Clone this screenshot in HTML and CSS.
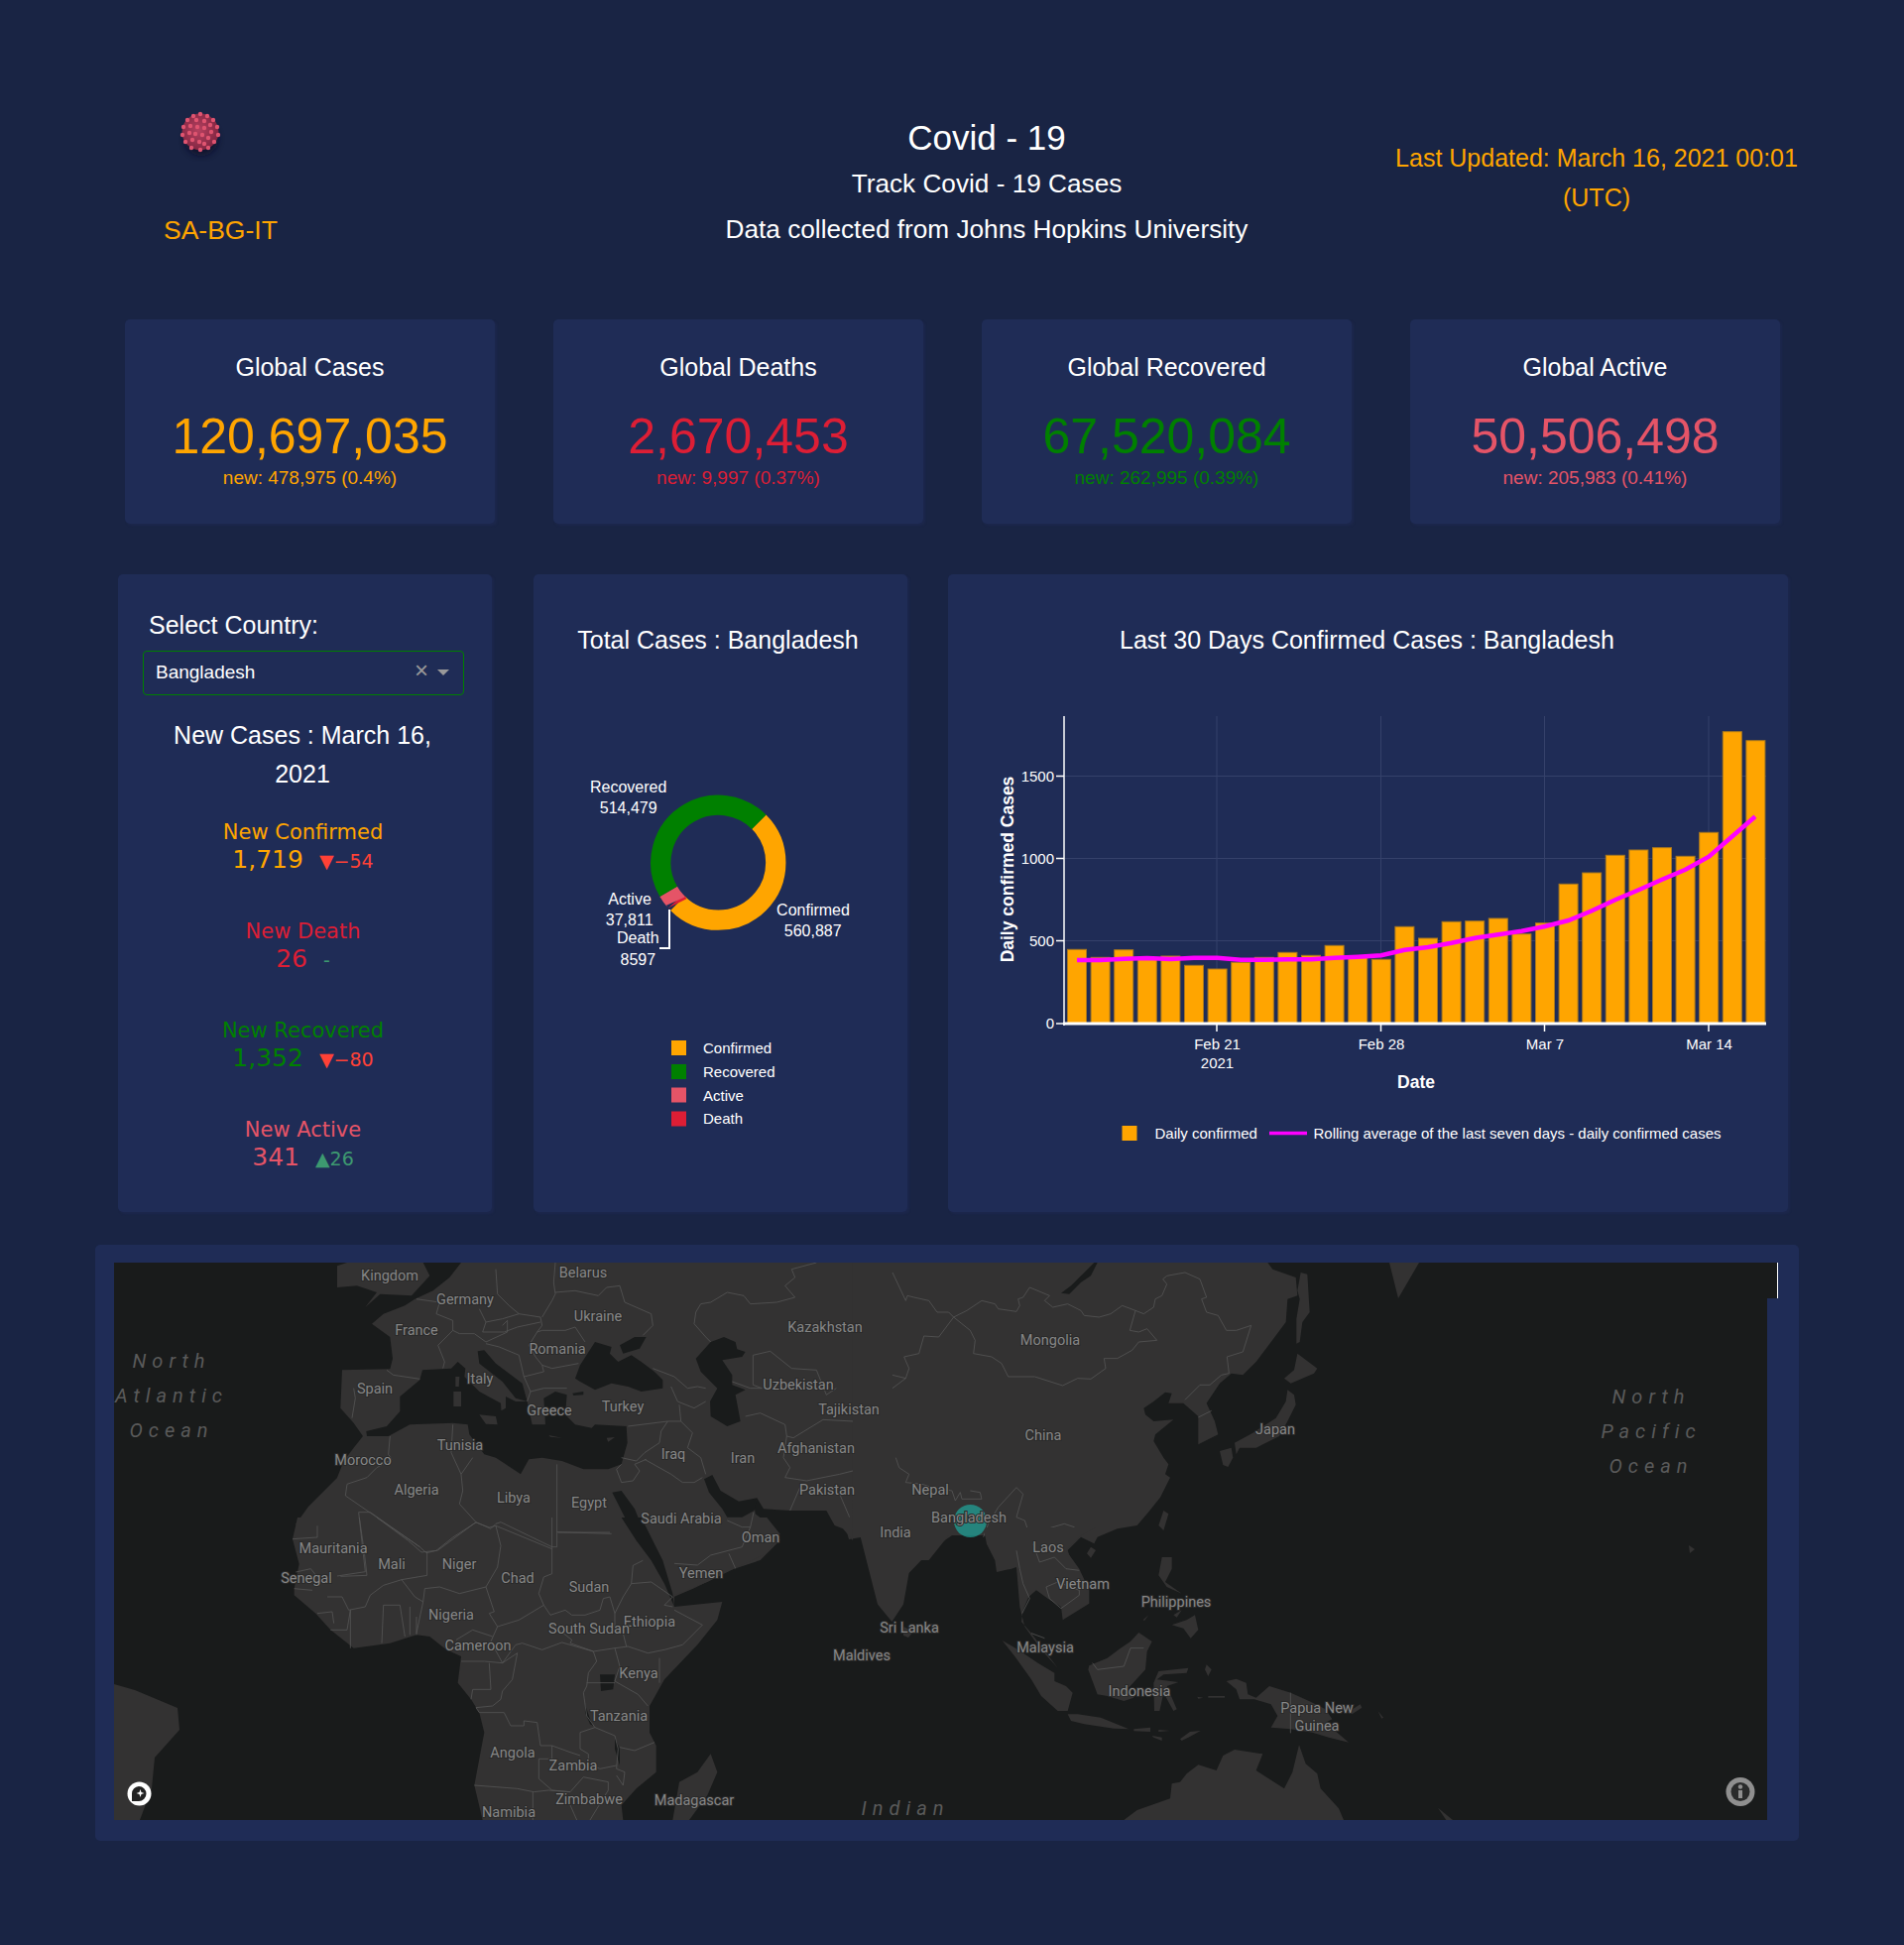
FILE: index.html
```html
<!DOCTYPE html>
<html>
<head>
    <meta charset="UTF-8">
    <title>Covid - 19</title>
    <link rel="stylesheet" href="styles.css">
</head>
<body>
    <div class="header">
        <div class="brand">
            <svg class="virus" width="60" height="60" viewBox="-30 -30 60 60">
                <defs>
                    <radialGradient id="virusBody" cx="45%" cy="45%" r="60%">
                        <stop offset="0" stop-color="#b5405f"/>
                        <stop offset="1" stop-color="#7e2440"/>
                    </radialGradient>
                    <filter id="virusShadow" x="-40%" y="-40%" width="180%" height="180%">
                        <feGaussianBlur stdDeviation="3"/>
                    </filter>
                </defs>
                <ellipse cx="1" cy="7" rx="17" ry="17" fill="#0c1128" opacity=".75" filter="url(#virusShadow)"/>
                <circle r="18.5" fill="url(#virusBody)"/>
                <g fill="#df5470">
                    <circle cx="0" cy="-18" r="2.2"/><circle cx="7" cy="-16" r="2.2"/><circle cx="-7" cy="-16" r="2.2"/>
                    <circle cx="13" cy="-12" r="2.2"/><circle cx="-13" cy="-12" r="2.2"/><circle cx="17" cy="-5" r="2.2"/>
                    <circle cx="-17" cy="-5" r="2.2"/><circle cx="18" cy="3" r="2.2"/><circle cx="-18" cy="3" r="2.2"/>
                    <circle cx="14" cy="10" r="2.2"/><circle cx="-15" cy="10" r="2.2"/><circle cx="8" cy="16" r="2.2"/>
                    <circle cx="-9" cy="16" r="2.2"/><circle cx="0" cy="18" r="2.2"/>
                    <circle cx="-4" cy="-12" r="2.2"/><circle cx="4" cy="-11" r="2.2"/><circle cx="10" cy="-7" r="2.2"/>
                    <circle cx="-10" cy="-6" r="2.2"/><circle cx="-3" cy="-5" r="2.2"/><circle cx="4" cy="-4" r="2.2"/>
                    <circle cx="11" cy="0" r="2.2"/><circle cx="-11" cy="1" r="2.2"/><circle cx="-5" cy="2" r="2.2"/>
                    <circle cx="2" cy="3" r="2.2"/><circle cx="8" cy="6" r="2.2"/><circle cx="-8" cy="8" r="2.2"/>
                    <circle cx="-1" cy="10" r="2.2"/><circle cx="4" cy="12" r="2.2"/>
                </g>
            </svg>
            <div class="brand-name">SA-BG-IT</div>
        </div>
        <div class="titles">
            <h3>Covid - 19</h3>
            <h5>Track Covid - 19 Cases</h5>
            <h5>Data collected from Johns Hopkins University</h5>
        </div>
        <div class="updated">Last Updated: March 16, 2021 00:01 (UTC)</div>
    </div>

    <div class="stats">
        <div class="card">
            <div class="card-title">Global Cases</div>
            <div class="card-value orange">120,697,035</div>
            <div class="card-new orange">new: 478,975 (0.4%)</div>
        </div>
        <div class="card">
            <div class="card-title">Global Deaths</div>
            <div class="card-value red">2,670,453</div>
            <div class="card-new red">new: 9,997 (0.37%)</div>
        </div>
        <div class="card">
            <div class="card-title">Global Recovered</div>
            <div class="card-value green">67,520,084</div>
            <div class="card-new green">new: 262,995 (0.39%)</div>
        </div>
        <div class="card">
            <div class="card-title">Global Active</div>
            <div class="card-value pink">50,506,498</div>
            <div class="card-new pink">new: 205,983 (0.41%)</div>
        </div>
    </div>

    <div class="charts">
        <div class="panel panel-country">
            <p class="select-label">Select Country:</p>
            <div class="dropdown">
                <span class="dropdown-value">Bangladesh</span>
                <span class="dropdown-clear">×</span>
                <span class="dropdown-caret"></span>
            </div>
            <p class="new-cases">New Cases : March 16, 2021</p>
            <div class="indicator orange">
                <div class="indicator-title">New Confirmed</div>
                <div class="indicator-row"><span class="indicator-value">1,719</span><span class="delta down">▼−54</span></div>
            </div>
            <div class="indicator red">
                <div class="indicator-title">New Death</div>
                <div class="indicator-row"><span class="indicator-value">26</span><span class="delta up">-</span></div>
            </div>
            <div class="indicator green">
                <div class="indicator-title">New Recovered</div>
                <div class="indicator-row"><span class="indicator-value">1,352</span><span class="delta down">▼−80</span></div>
            </div>
            <div class="indicator pink">
                <div class="indicator-title">New Active</div>
                <div class="indicator-row"><span class="indicator-value">341</span><span class="delta up">▲26</span></div>
            </div>
        </div>

        <div class="panel panel-donut">
            <svg class="chart" width="378" height="643" viewBox="538 579 378 643">
                <text class="chart-title" x="724" y="654" text-anchor="middle">Total Cases : Bangladesh</text>
                <g transform="translate(724.3 869.7)" fill="none" stroke-width="20.3">
                    <circle r="58" pathLength="360" stroke="#ffa500" stroke-dasharray="180 180" transform="rotate(-45)"/>
                    <circle r="58" pathLength="360" stroke="#dd1e35" stroke-dasharray="2.76 357.24" transform="rotate(135)"/>
                    <circle r="58" pathLength="360" stroke="#e55467" stroke-dasharray="12.14 347.86" transform="rotate(137.76)"/>
                    <circle r="58" pathLength="360" stroke="#008000" stroke-dasharray="165.1 194.9" transform="rotate(149.9)"/>
                </g>
                <polyline points="675,917 675,956 665,956" fill="none" stroke="#fff" stroke-width="2"/>
                <g class="donut-label" text-anchor="middle">
                    <text x="633.7" y="799">Recovered</text>
                    <text x="633.7" y="820">514,479</text>
                    <text x="635" y="912">Active</text>
                    <text x="634.7" y="933">37,811</text>
                    <text x="643.3" y="951">Death</text>
                    <text x="643.3" y="973">8597</text>
                    <text x="820" y="923">Confirmed</text>
                    <text x="819.7" y="944">560,887</text>
                </g>
                <rect x="677" y="1049" width="15" height="15" fill="#ffa500"/>
                <rect x="677" y="1073" width="15" height="15" fill="#008000"/>
                <rect x="677" y="1096.5" width="15" height="15" fill="#e55467"/>
                <rect x="677" y="1120.5" width="15" height="15" fill="#dd1e35"/>
                <g class="legend-label">
                    <text x="709" y="1062">Confirmed</text>
                    <text x="709" y="1086">Recovered</text>
                    <text x="709" y="1110">Active</text>
                    <text x="709" y="1133">Death</text>
                </g>
            </svg>
        </div>

        <div class="panel panel-bars">
            <svg class="chart" width="848" height="643" viewBox="957 579 848 643">
                <text class="chart-title" x="1379.5" y="654" text-anchor="middle">Last 30 Days Confirmed Cases : Bangladesh</text>
                <g class="grid">
                    <line x1="1074" x2="1782" y1="782.5" y2="782.5"/>
                    <line x1="1074" x2="1782" y1="865.5" y2="865.5"/>
                    <line x1="1074" x2="1782" y1="948.5" y2="948.5"/>
                    <line x1="1228" x2="1228" y1="722" y2="1032"/>
                    <line x1="1393.5" x2="1393.5" y1="722" y2="1032"/>
                    <line x1="1558.5" x2="1558.5" y1="722" y2="1032"/>
                    <line x1="1724" x2="1724" y1="722" y2="1032"/>
                </g>
                <g class="bars">
                    <rect x="1077.5" y="957.3" width="19" height="74.7"/>
                    <rect x="1101.1" y="965.3" width="19" height="66.7"/>
                    <rect x="1124.7" y="957.7" width="19" height="74.3"/>
                    <rect x="1148.3" y="966.7" width="19" height="65.3"/>
                    <rect x="1171.9" y="964" width="19" height="68"/>
                    <rect x="1195.5" y="973.3" width="19" height="58.7"/>
                    <rect x="1219.1" y="977" width="19" height="55"/>
                    <rect x="1242.7" y="970.3" width="19" height="61.7"/>
                    <rect x="1266.3" y="965.3" width="19" height="66.7"/>
                    <rect x="1289.9" y="960.3" width="19" height="71.7"/>
                    <rect x="1313.5" y="963.3" width="19" height="68.7"/>
                    <rect x="1337.1" y="953.3" width="19" height="78.7"/>
                    <rect x="1360.7" y="965.7" width="19" height="66.3"/>
                    <rect x="1384.3" y="967.3" width="19" height="64.7"/>
                    <rect x="1407.9" y="934.3" width="19" height="97.7"/>
                    <rect x="1431.5" y="946" width="19" height="86"/>
                    <rect x="1455.1" y="929.3" width="19" height="102.7"/>
                    <rect x="1478.7" y="928.7" width="19" height="103.3"/>
                    <rect x="1502.3" y="926" width="19" height="106"/>
                    <rect x="1525.9" y="941.7" width="19" height="90.3"/>
                    <rect x="1549.5" y="930.7" width="19" height="101.3"/>
                    <rect x="1573.1" y="891.3" width="19" height="140.7"/>
                    <rect x="1596.7" y="880" width="19" height="152"/>
                    <rect x="1620.3" y="862.3" width="19" height="169.7"/>
                    <rect x="1643.9" y="857" width="19" height="175"/>
                    <rect x="1667.5" y="854.7" width="19" height="177.3"/>
                    <rect x="1691.1" y="863.3" width="19" height="168.7"/>
                    <rect x="1714.7" y="839.3" width="19" height="192.7"/>
                    <rect x="1738.3" y="737.7" width="19" height="294.3"/>
                    <rect x="1761.9" y="746.7" width="19" height="285.3"/>
                </g>
                <polyline class="rolling" points="1087,968 1110.6,968 1134.2,966.7 1157.8,966 1181.4,967 1205,965.7 1228.6,965.7 1252.2,967.7 1275.8,967.7 1299.4,967.3 1323,967.3 1346.6,965.7 1370.2,964.7 1393.8,963.3 1417.4,957.7 1441,955 1464.6,950.7 1488.2,945.7 1511.8,942.3 1535.4,938.7 1559,934 1582.6,928 1606.2,918.3 1629.8,907.3 1653.4,897.3 1677,886.7 1700.6,876.7 1724.2,863.7 1747.8,843.3 1771,823.3"/>
                <g class="axis">
                    <line x1="1074" x2="1074" y1="722" y2="1034"/>
                    <line x1="1073" x2="1782" y1="1032" y2="1032"/>
                    <line x1="1066" x2="1074" y1="782.5" y2="782.5"/>
                    <line x1="1066" x2="1074" y1="865.5" y2="865.5"/>
                    <line x1="1066" x2="1074" y1="948.5" y2="948.5"/>
                    <line x1="1066" x2="1074" y1="1032" y2="1032"/>
                    <line x1="1228" x2="1228" y1="1032" y2="1040"/>
                    <line x1="1393.5" x2="1393.5" y1="1032" y2="1040"/>
                    <line x1="1558.5" x2="1558.5" y1="1032" y2="1040"/>
                    <line x1="1724" x2="1724" y1="1032" y2="1040"/>
                </g>
                <g class="tick" text-anchor="end">
                    <text x="1064" y="788">1500</text>
                    <text x="1064" y="871">1000</text>
                    <text x="1064" y="954">500</text>
                    <text x="1064" y="1037">0</text>
                </g>
                <g class="tick" text-anchor="middle">
                    <text x="1228.5" y="1058">Feb 21</text>
                    <text x="1228.5" y="1077">2021</text>
                    <text x="1394" y="1058">Feb 28</text>
                    <text x="1559" y="1058">Mar 7</text>
                    <text x="1724.5" y="1058">Mar 14</text>
                </g>
                <text class="axis-title" x="1429" y="1096.5" text-anchor="middle">Date</text>
                <text class="axis-title" transform="translate(1022.5 876.5) rotate(-90)" text-anchor="middle">Daily confirmed Cases</text>
                <rect x="1132.5" y="1135" width="15" height="15" fill="#ffa500"/>
                <line x1="1281" x2="1319" y1="1142.5" y2="1142.5" stroke="#ff00ff" stroke-width="3.5"/>
                <g class="legend-label">
                    <text x="1165.5" y="1148">Daily confirmed</text>
                    <text x="1325.5" y="1148">Rolling average of the last seven days - daily confirmed cases</text>
                </g>
            </svg>
        </div>
    </div>

    <div class="map-panel">
        <div class="map">
            <svg width="1667" height="562" viewBox="115 1273 1667 562">
                <rect x="115" y="1273" width="1667" height="562" fill="#191b1b"/>

                <!-- land that falls between the traced tiles, page coordinates -->
                <g class="land">
                    <path d="M850 1273 L960 1273 L960 1548 L939.6 1562 L916.6 1586 L911 1617.6 L899.4 1635 L885 1617.6 L867.8 1550 L856 1552 L850 1530 Z"/>
                    <path d="M340 1490 L311 1519 L298 1537 L345 1537 Z"/>
                    <path d="M911 1640 L921 1645 L916 1651 L911 1649 Z"/>
                    <path d="M1401 1273 L1431 1273 L1410 1309 Z"/>
                    <path d="M1703 1558 L1709 1562 L1704 1566 Z"/>
                    <path d="M115 1698 L136 1704 L179 1722 L181 1744 L156 1772 L153 1803 L141 1835 L115 1835 Z"/>
                </g>

                <!-- tile: europe and middle east, 3x from 340,1273 -->
                <g transform="translate(340 1273) scale(.33333)">
                    <g class="land">
                        <path d="M375 0 L1560 0 L1560 840 L1530 805 L1505 795 L1480 750 L1370 750 L1290 745 L1270 712 L1262 735 L1265 760 L1330 810 L1340 840 L1280 900 L1190 930 L1080 985 L1020 1010 L1020 1020 L0 1020 L0 650 L20 600 L50 560 L78 525 L50 485 L10 440 L15 325 L160 322 L168 290 L160 225 L105 185 L140 155 L205 130 L235 110 L290 85 L340 45 Z"/>
                        <path d="M0 10 L30 0 L260 0 L280 40 L225 100 L130 95 L85 135 L120 90 L60 70 L0 75 Z"/>
                    </g>
                    <g class="water">
                        <path d="M88 510 L150 495 L190 450 L190 405 L250 355 L258 325 L345 320 L365 300 L388 320 L385 345 L430 390 L495 425 L497 455 L470 462 L510 440 L510 405 L540 420 L575 420 L590 490 L630 490 L625 410 L660 390 L695 400 L690 460 L720 490 L770 500 L780 490 L875 495 L878 545 L860 610 L820 625 L745 625 L680 600 L620 590 L580 595 L555 640 L480 590 L445 580 L400 520 L395 490 L350 485 L220 490 L155 525 L90 525 Z"/>
                        <path d="M425 268 L445 265 L480 305 L560 365 L575 420 L540 410 L500 360 L430 305 Z"/>
                        <path d="M720 350 L735 310 L780 240 L830 255 L825 275 L850 300 L890 280 L920 300 L960 330 L985 355 L985 380 L920 390 L880 375 L830 365 L780 385 L735 360 Z"/>
                        <path d="M855 250 L900 225 L935 225 L915 260 L865 275 Z"/>
                        <path d="M712 395 L745 390 L745 400 L715 402 Z"/>
                        <path d="M1085 290 L1130 240 L1170 225 L1205 240 L1210 262 L1235 270 L1225 285 L1165 295 L1195 340 L1195 370 L1235 385 L1205 400 L1220 480 L1180 495 L1130 465 L1128 420 L1150 380 L1100 330 Z"/>
                        <path d="M832 695 L860 690 L900 745 L935 830 L985 905 L1005 960 L1018 1000 L1000 1000 L945 940 L900 860 L875 780 Z"/>
                        <path d="M1110 655 L1135 642 L1160 690 L1215 722 L1270 712 L1262 750 L1225 770 L1180 770 L1165 745 L1125 695 Z"/>
                    </g>
                </g>

                <!-- tile: africa, 3x from 280,1530 -->
                <g transform="translate(280 1530) scale(.33333)">
                    <path class="land-fill" d="M60 0 L1480 0 L1520 50 L1475 110 L1380 155 L1300 195 L1200 235 L1200 270 L1345 255 L1330 310 L1270 385 L1170 490 L1125 570 L1125 650 L1145 690 L1145 770 L1085 820 L1040 870 L1045 915 L620 915 L595 810 L625 650 L610 590 L585 550 L545 500 L555 420 L510 400 L460 360 L420 355 L340 380 L230 395 L160 340 L115 290 L50 235 L50 215 L65 140 L45 65 Z"/>
                    <path class="land-fill" d="M1310 715 L1330 770 L1300 840 L1245 915 L1195 915 L1215 800 L1270 770 Z"/>
                    <g class="water">
                        <path d="M1040 0 L1100 0 L1130 60 L1165 130 L1195 230 L1200 270 L1170 200 L1130 130 L1085 70 Z"/>
                        <path d="M975 475 L1020 475 L1015 520 L978 525 Z"/>
                        <path d="M930 565 L945 610 L955 630 L945 625 L930 590 Z"/>
                        <path d="M1020 665 L1035 700 L1035 750 L1020 700 Z"/>
                    </g>
                    <g class="border">
                        <polyline points="120,25 120,60 45,65"/>
                        <polyline points="247,0 262,105 270,175 190,178"/>
                        <polyline points="300,0 395,70 435,105 480,100 530,60 600,15 640,30 660,25 830,95"/>
                        <polyline points="660,25 675,85 665,150 630,210 655,285 640,290 665,330 645,375 680,440"/>
                        <polyline points="830,0 830,170 805,180 790,230 805,265"/>
                        <polyline points="848,45 1005,45"/>
                        <polyline points="452,105 452,175 375,188 320,205 280,235 265,270 215,280 195,240 150,240"/>
                        <polyline points="375,188 415,240 440,255 420,350"/>
                        <polyline points="440,255 445,215 490,210 550,230 630,210"/>
                        <polyline points="805,265 730,310 665,330"/>
                        <polyline points="805,265 825,295 870,280 890,295 930,295 975,280 985,245 1005,240 1020,290 1020,340"/>
                        <polyline points="1020,290 1045,240 1070,200 1130,195 1195,240"/>
                        <polyline points="1070,200 1075,145 1105,130"/>
                        <polyline points="1195,270 1170,265 1195,240"/>
                        <polyline points="1200,280 1285,325 1225,385 1170,400 1120,410 1060,390 1020,395"/>
                        <polyline points="1020,340 1045,350 1055,390"/>
                        <polyline points="825,320 890,370 885,380 955,405 1020,395"/>
                        <polyline points="955,405 965,435 940,470 935,510 925,530 935,600 960,635 1020,660 1030,700 1025,760 1050,770 1045,810 1025,780"/>
                        <polyline points="1020,395 1035,450 1020,495 1090,535 1120,570"/>
                        <polyline points="1155,425 1155,500"/>
                        <polyline points="935,500 1020,500"/>
                        <polyline points="960,635 915,650 915,700 940,715 940,745 975,760 1025,750"/>
                        <polyline points="1035,695 1080,705 1140,680"/>
                        <polyline points="680,440 720,385 740,380 800,400 860,378 955,405"/>
                        <polyline points="725,410 680,440 625,435 555,435"/>
                        <polyline points="725,410 710,490 680,525 675,550 650,570 600,575 610,590 685,590 705,630 745,630 745,615 785,620 795,690 830,690 885,710 915,720"/>
                        <polyline points="830,690 830,730 790,730 790,790 830,825 885,830 925,785 1000,800 1000,825 945,915"/>
                        <polyline points="595,810 725,820 775,830 820,825 885,830"/>
                        <polyline points="772,830 772,915"/>
                        <polyline points="885,870 905,915"/>
                        <polyline points="640,440 645,520 590,520 585,550"/>
                        <polyline points="220,395 220,280 210,340 160,340"/>
                        <polyline points="120,290 165,285 170,320"/>
                        <polyline points="315,380 320,265 370,265 385,360"/>
                        <polyline points="400,355 400,270"/>
                        <polyline points="420,355 420,300"/>
                        <polyline points="50,215 105,220"/>
                        <polyline points="55,165 100,155 120,180"/>
                        <polyline points="650,360 590,340 540,370"/>
                    </g>
                </g>

                <!-- tile: europe borders, drawn after africa so they stay on top -->
                <g transform="translate(340 1273) scale(.33333)">
                    <g class="land">
                        <path d="M358 345 L370 345 L368 375 L358 375 Z"/>
                        <path d="M352 390 L375 390 L375 435 L352 435 Z"/>
                        <path d="M430 460 L480 465 L485 490 L450 488 Z"/>
                        <path d="M640 522 L680 530 L645 527 Z"/>
                        <path d="M815 530 L840 528 L820 542 Z"/>
                    </g>
                    <g class="border">
                        <polyline points="480,20 485,95 520,130 550,155 615,165 620,190"/>
                        <polyline points="660,0 655,60 660,95 650,115 620,165"/>
                        <polyline points="660,90 720,85 790,100 815,75 855,70 870,120 950,155 955,190 925,220"/>
                        <polyline points="620,190 605,210 620,205 690,205 720,195 750,240"/>
                        <polyline points="605,210 580,250 600,285 620,310 650,320 730,305"/>
                        <polyline points="620,310 625,330 565,345 585,390 625,380 695,380"/>
                        <polyline points="585,390 575,420"/>
                        <polyline points="500,190 515,175 515,210 450,240 415,215 370,215 350,205 305,250 325,300 320,320"/>
                        <polyline points="350,205 350,175 300,155 310,120 240,110"/>
                        <polyline points="430,140 450,180 500,170 550,155"/>
                        <polyline points="450,180 440,210 505,210 545,195 615,180"/>
                        <polyline points="450,245 490,255 550,280 565,345"/>
                        <polyline points="150,325 170,340 250,352"/>
                        <polyline points="50,380 55,410 45,470"/>
                        <polyline points="955,320 1020,345 1060,380 1090,375 1115,380"/>
                        <polyline points="1010,375 1030,420 1080,440 1115,420"/>
                        <polyline points="880,495 1000,480 1040,480 1035,430"/>
                        <polyline points="1000,480 980,510 975,545 930,575 905,600 860,590"/>
                        <polyline points="930,595 1010,640 1045,665 1080,665 1105,650"/>
                        <polyline points="1040,480 1075,515 1060,560 1100,590 1115,640"/>
                        <polyline points="860,610 845,625 860,665 895,660 915,630 900,610 935,595"/>
                        <polyline points="1195,360 1250,380 1285,380 1258,370 1258,280 1310,268 1375,320 1450,325 1480,400 1510,380"/>
                        <polyline points="1235,465 1280,455 1355,490 1360,525 1380,530 1470,475 1560,480"/>
                        <polyline points="1360,525 1350,590 1370,620 1355,650 1420,660 1520,640 1560,630"/>
                        <polyline points="1400,680 1370,750"/>
                        <polyline points="1520,700 1550,770"/>
                        <polyline points="1085,150 1100,125 1130,120 1180,90 1230,100 1250,125 1330,120 1385,105 1355,70 1385,45 1375,20 1450,0"/>
                        <polyline points="1085,150 1080,185 1115,225 1130,240"/>
                        <polyline points="1180,780 1225,800 1250,800 1260,755"/>
                        <polyline points="1020,910 1090,915 1130,885 1225,860 1250,800"/>
                        <polyline points="1185,880 1205,925"/>
                        <polyline points="665,610 665,860 650,860 495,785 480,790 465,805 420,785 370,730 380,690 375,640 345,575 350,490"/>
                        <polyline points="410,590 375,640"/>
                        <polyline points="160,525 155,580 165,595 120,620 90,650 30,670 25,705 250,860 270,878 305,870 420,785"/>
                        <polyline points="665,815 830,820"/>
                        <polyline points="65,755 100,755 250,860"/>
                        <polyline points="65,755 85,935 0,948"/>
                    </g>
                </g>

                <!-- tile: north east asia, 3x from 900,1273 -->
                <g transform="translate(900 1273) scale(.33333)">
                    <g class="land">
                        <path d="M0 0 L1135 0 L1150 20 L1220 45 L1225 100 L1195 110 L1190 180 L1130 260 L1100 300 L1060 340 L1025 335 L990 365 L950 425 L975 480 L985 520 L925 550 L925 465 L880 425 L835 425 L845 395 L825 392 L790 420 L760 440 L765 460 L790 480 L850 475 L795 520 L790 540 L820 590 L835 610 L825 640 L840 650 L810 710 L770 760 L740 795 L680 805 L620 830 L610 850 L570 830 L530 870 L540 900 L315 900 L280 825 L170 825 L110 900 L0 900 Z"/>
                        <path d="M1235 30 L1255 35 L1262 150 L1240 180 L1232 240 L1222 245 L1222 170 L1232 110 L1225 85 Z"/>
                        <path d="M1225 275 L1285 320 L1275 335 L1240 350 L1205 365 L1185 350 L1215 325 Z"/>
                        <path d="M1195 385 L1215 400 L1220 430 L1195 480 L1170 525 L1100 560 L1050 560 L1040 580 L1035 545 L1090 515 L1160 470 L1190 420 Z"/>
                        <path d="M990 570 L1025 560 L1030 590 L1015 618 L1000 612 Z"/>
                        <path d="M820 750 L835 760 L820 810 L805 795 Z"/>
                        <path d="M600 860 L615 870 L600 893 L588 880 Z"/>
                    </g>
                    <g class="water">
                        <path d="M610 0 L620 0 L600 40 L570 60 L535 95 L510 92 L540 70 L580 30 Z"/>
                    </g>
                    <g class="border">
                        <polyline points="0,30 40,115 45,100 65,105 110,115 135,150 170,150 185,165 140,225 95,222 80,275 35,285 50,320 40,350 0,380"/>
                        <polyline points="0,340 40,350"/>
                        <polyline points="185,165 225,145 270,115 310,125 320,140 375,148 385,130 380,110 395,105 415,75 475,100 460,115 485,135 530,125 570,145 580,160 625,165 660,155 695,130 735,145 760,155 790,135 795,110 815,100 830,65 818,50 830,40 885,30 930,50 950,105 935,110 950,150 985,160 1010,205 1040,205 1085,190 1060,270 1012,285 1018,335 995,340 960,370 930,370 885,415"/>
                        <polyline points="185,165 235,205 250,235 245,275 300,285 330,305 350,345 430,345 515,372 560,350 600,352 645,320 640,290 680,290 725,265 745,240 800,235 770,200 745,210 718,205 735,145"/>
                        <polyline points="925,468 965,448"/>
                        <polyline points="10,590 20,620 50,640 40,665 90,670 120,680 180,690 190,720 205,695 210,715 270,715 265,695 235,690"/>
                        <polyline points="275,830 290,790 320,740 375,680 395,700 375,770 400,780 410,810 440,830 450,810 520,790 550,800 570,825"/>
                        <polyline points="415,850 370,890"/>
                    </g>
                </g>

                <!-- tile: south east asia, 3x from 960,1540 -->
                <g transform="translate(960 1540) scale(.33333)">
                    <g class="land">
                        <path d="M95 0 L435 0 L390 25 L345 70 L385 125 L415 190 L415 230 L335 280 L330 240 L290 215 L255 190 L232 210 L215 250 L210 285 L240 320 L320 425 L270 370 L220 300 L205 240 L195 120 L180 125 L135 135 L130 100 L105 50 Z"/>
                        <path d="M635 90 L665 90 L665 125 L645 165 L695 200 L650 180 L625 145 Z"/>
                        <path d="M665 295 L710 280 L735 265 L745 310 L722 335 L700 305 Z"/>
                        <path d="M670 265 L695 250 L680 272 Z"/>
                        <path d="M578 280 L595 265 L582 282 Z"/>
                        <path d="M152 342 L200 370 L260 410 L310 440 L310 465 L345 480 L365 500 L350 555 L320 555 L270 510 L240 460 L190 390 Z"/>
                        <path d="M350 565 L380 565 L450 575 L535 610 L490 608 L400 595 L360 585 Z"/>
                        <path d="M550 610 L600 605 L600 618 L550 616 Z"/>
                        <path d="M625 612 L660 615 L625 618 Z"/>
                        <path d="M690 640 L720 618 L752 615 L715 635 L695 645 Z"/>
                        <path d="M605 630 L635 635 L635 645 L610 635 Z"/>
                        <path d="M565 318 L605 345 L590 375 L585 430 L530 490 L550 515 L520 525 L470 510 L440 505 L412 430 L415 418 L470 395 L510 365 L540 345 Z"/>
                        <path d="M625 435 L715 425 L710 440 L640 445 L620 460 L685 468 L650 480 L680 550 L670 555 L640 500 L628 555 L612 555 L610 470 Z"/>
                        <path d="M770 415 L785 430 L775 450 L765 430 Z"/>
                        <path d="M775 510 L825 510 L825 515 L775 515 Z"/>
                        <path d="M742 512 L760 515 L745 518 Z"/>
                        <path d="M830 465 L860 458 L890 470 L895 505 L920 515 L960 480 L1025 500 L1080 525 L1130 550 L1150 580 L1130 590 L1200 650 L1140 635 L1090 620 L1025 610 L965 605 L985 570 L965 535 L915 520 L870 520 L860 490 Z"/>
                        <path d="M1195 560 L1235 535 L1240 545 L1210 565 Z"/>
                        <path d="M1288 555 L1305 575 L1300 578 Z"/>
                        <path d="M520 885 L560 855 L660 820 L665 775 L690 770 L710 745 L745 718 L800 735 L820 690 L855 672 L940 685 L920 735 L1005 790 L1030 740 L1050 658 L1070 715 L1105 745 L1115 790 L1170 850 L1185 885 Z"/>
                        <path d="M1470 848 L1515 885 L1495 885 Z"/>
                    </g>
                    <g class="border">
                        <polyline points="195,70 205,125 215,170 235,215 212,260"/>
                        <polyline points="245,50 265,105 310,90 345,125 385,130"/>
                        <polyline points="285,180 320,165 385,190 385,205 330,245 295,215 285,180"/>
                        <polyline points="425,410 440,430 520,420 540,365 580,365"/>
                        <polyline points="240,320 280,335"/>
                        <polyline points="1024,500 1024,622"/>
                    </g>
                </g>

                <ellipse cx="978.5" cy="1533.5" rx="16.5" ry="16.5" fill="#1fa79d" opacity=".7"/>

                <g class="place">
                    <text x="393" y="1291">Kingdom</text><text x="588" y="1288">Belarus</text><text x="469" y="1315">Germany</text>
                    <text x="603" y="1332">Ukraine</text><text x="420" y="1346">France</text><text x="562" y="1365">Romania</text>
                    <text x="832" y="1343">Kazakhstan</text><text x="1059" y="1356">Mongolia</text><text x="484" y="1395">Italy</text>
                    <text x="378" y="1405">Spain</text><text x="805" y="1401">Uzbekistan</text><text x="554" y="1427">Greece</text>
                    <text x="628" y="1423">Turkey</text><text x="856" y="1426">Tajikistan</text><text x="1052" y="1452">China</text>
                    <text x="1286" y="1446">Japan</text><text x="464" y="1462">Tunisia</text><text x="679" y="1471">Iraq</text>
                    <text x="749" y="1475">Iran</text><text x="823" y="1465">Afghanistan</text><text x="366" y="1477">Morocco</text>
                    <text x="420" y="1507">Algeria</text><text x="518" y="1515">Libya</text><text x="594" y="1520">Egypt</text>
                    <text x="834" y="1507">Pakistan</text><text x="938" y="1507">Nepal</text><text x="687" y="1536">Saudi Arabia</text>
                    <text x="977" y="1535">Bangladesh</text><text x="903" y="1550">India</text><text x="767" y="1555">Oman</text>
                    <text x="1057" y="1565">Laos</text><text x="336" y="1566">Mauritania</text><text x="395" y="1582">Mali</text>
                    <text x="463" y="1582">Niger</text><text x="309" y="1596">Senegal</text><text x="522" y="1596">Chad</text>
                    <text x="707" y="1591">Yemen</text><text x="594" y="1605">Sudan</text><text x="1092" y="1602">Vietnam</text>
                    <text x="1186" y="1620">Philippines</text><text x="455" y="1633">Nigeria</text><text x="655" y="1640">Ethiopia</text>
                    <text x="594" y="1647">South Sudan</text><text x="917" y="1646">Sri Lanka</text><text x="482" y="1664">Cameroon</text>
                    <text x="1054" y="1666">Malaysia</text><text x="869" y="1674">Maldives</text><text x="644" y="1692">Kenya</text>
                    <text x="1149" y="1710">Indonesia</text><text x="1328" y="1727">Papua New</text><text x="1328" y="1745">Guinea</text>
                    <text x="624" y="1735">Tanzania</text><text x="517" y="1772">Angola</text><text x="578" y="1785">Zambia</text>
                    <text x="594" y="1819">Zimbabwe</text><text x="700" y="1820">Madagascar</text><text x="513" y="1832">Namibia</text>
                </g>
                <g class="ocean">
                    <text x="173" y="1379">North</text><text x="173" y="1414">Atlantic</text><text x="173" y="1449">Ocean</text>
                    <text x="1665" y="1415">North</text><text x="1665" y="1450">Pacific</text><text x="1665" y="1485">Ocean</text>
                    <text x="913" y="1830">Indian</text>
                </g>

                <!-- map logo and attribution button -->
                <circle cx="140.5" cy="1808.5" r="12" fill="#fff"/>
                <path d="M140 1801 a7.5 7.5 0 1 1 0 15 h-7 v-7.5 a7.5 7.5 0 0 1 7 -7.5 z" fill="#222"/>
                <path d="M141.5 1804 l1 3 l3 1 l-3 1 l-1 3 l-1 -3 l-3 -1 l3 -1 z" fill="#fff"/>
                <circle cx="1755" cy="1806.5" r="14.5" fill="#8f8f8f"/>
                <circle cx="1755" cy="1806.5" r="9.5" fill="#2a2b2b"/>
                <rect x="1753" y="1805" width="4" height="8" fill="#8f8f8f"/>
                <circle cx="1755" cy="1801.5" r="2.2" fill="#8f8f8f"/>
            </svg>
        </div>
        <div class="map-corner"></div>
    </div>
</body>
</html>
```

FILE: styles.css
```css
html, body {
    margin: 0;
    padding: 0;
    background-color: #192444;
}
body {
    width: 1920px;
    height: 1961px;
    font-family: "Liberation Sans", Arial, sans-serif;
    color: #fff;
    overflow: hidden;
}
.orange { color: #ffa500; }
.red { color: #dd1e35; }
.green { color: #008000; }
.pink { color: #e55467; }

/* header */
.header {
    display: flex;
    height: 322px;
}
.brand {
    width: 115px;
    padding-left: 165px;
    flex: none;
}
.virus {
    display: block;
    margin: 103px 0 0 7px;
}
.brand-name {
    margin-top: 51px;
    color: #ffa500;
    font-size: 26.5px;
    line-height: 36px;
    white-space: nowrap;
}
.titles {
    width: 800px;
    margin-left: 315px;
    padding-top: 116px;
    text-align: center;
}
.titles h3 {
    margin: 0;
    font-size: 35px;
    font-weight: normal;
    line-height: 46px;
}
.titles h5 {
    margin: 0;
    font-size: 26.2px;
    font-weight: normal;
    line-height: 46px;
}
.updated {
    width: 420px;
    margin-left: 5px;
    padding-top: 139px;
    color: #ffa500;
    font-size: 25px;
    line-height: 40px;
    text-align: center;
}

/* top cards */
.stats {
    display: grid;
    grid-template-columns: repeat(4, 373px);
    gap: 59px;
    padding-left: 126px;
}
.card {
    height: 206px;
    background-color: #1f2c56;
    border-radius: 5px;
    box-shadow: 2px 2px 2px #1c274c;
    text-align: center;
}
.card-title {
    padding-top: 28px;
    font-size: 25px;
    line-height: 40px;
}
.card-value {
    margin-top: 20px;
    font-size: 50px;
    line-height: 60px;
}
.card-new {
    font-size: 19px;
    line-height: 24px;
}

/* chart row */
.charts {
    display: flex;
    gap: 42px;
    margin-top: 51px;
    padding-left: 119px;
}
.panel {
    height: 643px;
    background-color: #1f2c56;
    border-radius: 5px;
    box-shadow: 2px 2px 2px #1c274c;
}
.panel-country {
    width: 377px;
}
.panel-donut {
    width: 377px;
    overflow: hidden;
}
.panel-bars {
    width: 847px;
    margin-left: -1px;
    overflow: hidden;
}
.chart {
    display: block;
}
.chart-title {
    fill: #fff;
    font-size: 25px;
}
.donut-label text {
    fill: #fff;
    font-size: 16px;
}
.legend-label text {
    fill: #fff;
    font-size: 15px;
}
.grid line {
    stroke: #35416a;
    stroke-width: 1;
}
.bars rect {
    fill: #ffa500;
    stroke: #a9781e;
    stroke-width: 1;
}
.rolling {
    fill: none;
    stroke: #ff00ff;
    stroke-width: 4.5;
}
.axis line {
    stroke: #fff;
    stroke-width: 1.5;
}
.axis line:nth-child(2) {
    stroke-width: 3;
}
.tick text {
    fill: #fff;
    font-size: 15px;
}
.axis-title {
    fill: #fff;
    font-size: 17.5px;
    font-weight: bold;
}

/* country panel */
.panel-country {
    padding: 0 25px;
    box-sizing: border-box;
}
.select-label {
    margin: 0;
    padding: 34px 0 0 6px;
    font-size: 25px;
    line-height: 34px;
}
.dropdown {
    display: flex;
    align-items: center;
    height: 45px;
    margin-top: 9px;
    padding: 0 14px 2px 12px;
    box-sizing: border-box;
    width: 324px;
    border: 1px solid #008000;
    border-radius: 4px;
}
.dropdown-value {
    flex: 1;
    font-size: 19px;
}
.dropdown-clear {
    margin-right: 9px;
    color: #999;
    font-size: 24px;
    line-height: 24px;
    position: relative;
    top: -2px;
}
.dropdown-caret {
    width: 0;
    height: 0;
    border-left: 6px solid transparent;
    border-right: 6px solid transparent;
    border-top: 6px solid #999;
}
.new-cases {
    margin: 21px 0 25px;
    padding: 0 25px 0 20px;
    font-size: 25px;
    line-height: 39px;
    text-align: center;
}
.indicator {
    height: 100px;
    padding-right: 4px;
    box-sizing: border-box;
    font-family: "DejaVu Sans", Verdana, sans-serif;
    text-align: center;
}
.indicator-title {
    font-size: 21px;
    line-height: 28px;
}
.indicator-row {
    line-height: 28px;
}
.indicator-value {
    font-size: 25px;
}
.delta {
    margin-left: 16px;
    font-size: 19px;
}
.down { color: #ff4136; }
.up { color: #3d9970; }

/* map */
.map-panel {
    position: relative;
    width: 1718px;
    height: 601px;
    margin: 33px 0 0 96px;
    padding: 18px 0 0 19px;
    box-sizing: border-box;
    background-color: #1f2c56;
    border-radius: 5px;
}
.map {
    width: 1667px;
    height: 562px;
}
.map svg {
    display: block;
}
.map-corner {
    position: absolute;
    top: 18px;
    left: 1686px;
    width: 10px;
    height: 36px;
    background-color: #191b1b;
    border-right: 1px solid #fff;
}
.land path,
.land-fill {
    fill: #333232;
}
.water path {
    fill: #191b1b;
}
.border polyline,
.border polygon,
.border line {
    fill: none;
    stroke: #565655;
    stroke-width: .8;
    vector-effect: non-scaling-stroke;
}
.place text {
    fill: #868686;
    stroke: #2a2a2a;
    stroke-width: 2px;
    paint-order: stroke;
    font-family: "Liberation Sans Narrow", "Roboto", sans-serif;
    font-size: 14.5px;
    text-anchor: middle;
}
.ocean text {
    fill: #5a5a5a;
    font-family: "Roboto", sans-serif;
    font-size: 20px;
    font-style: italic;
    letter-spacing: 6px;
    text-anchor: middle;
}
```
